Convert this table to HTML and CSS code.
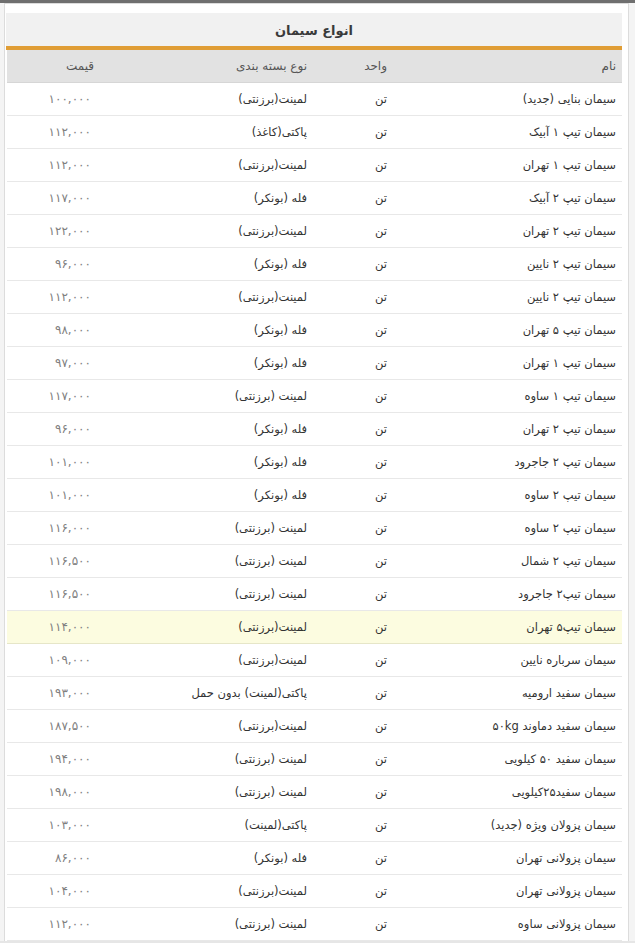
FILE: index.html
```html
<!DOCTYPE html>
<html lang="fa" dir="rtl">
<head>
<meta charset="utf-8">
<title>انواع سیمان</title>
<link rel="stylesheet" href="styles.css">
</head>
<body>
<div class="topbar"></div>
<div class="page">
  <div class="panel">
    <div class="title">انواع سیمان</div>
    <table class="grid">
      <colgroup>
        <col class="c-name"><col class="c-unit"><col class="c-pack"><col class="c-price">
      </colgroup>
      <thead>
        <tr><th>نام</th><th>واحد</th><th>نوع بسته بندی</th><th>قیمت</th></tr>
      </thead>
      <tbody>
        <tr><td>سیمان بنایی (جدید)</td><td>تن</td><td>لمینت(برزنتی)</td><td class="price">۱۰۰,۰۰۰</td></tr>
        <tr><td>سیمان تیپ ۱ آبیک</td><td>تن</td><td>پاکتی(کاغذ)</td><td class="price">۱۱۲,۰۰۰</td></tr>
        <tr><td>سیمان تیپ ۱ تهران</td><td>تن</td><td>لمینت(برزنتی)</td><td class="price">۱۱۲,۰۰۰</td></tr>
        <tr><td>سیمان تیپ ۲ آبیک</td><td>تن</td><td>فله (بونکر)</td><td class="price">۱۱۷,۰۰۰</td></tr>
        <tr><td>سیمان تیپ ۲ تهران</td><td>تن</td><td>لمینت(برزنتی)</td><td class="price">۱۲۲,۰۰۰</td></tr>
        <tr><td>سیمان تیپ ۲ نایین</td><td>تن</td><td>فله (بونکر)</td><td class="price">۹۶,۰۰۰</td></tr>
        <tr><td>سیمان تیپ ۲ نایین</td><td>تن</td><td>لمینت(برزنتی)</td><td class="price">۱۱۲,۰۰۰</td></tr>
        <tr><td>سیمان تیپ ۵ تهران</td><td>تن</td><td>فله (بونکر)</td><td class="price">۹۸,۰۰۰</td></tr>
        <tr><td>سیمان تیپ ۱ تهران</td><td>تن</td><td>فله (بونکر)</td><td class="price">۹۷,۰۰۰</td></tr>
        <tr><td>سیمان تیپ ۱ ساوه</td><td>تن</td><td>لمینت (برزنتی)</td><td class="price">۱۱۷,۰۰۰</td></tr>
        <tr><td>سیمان تیپ ۲ تهران</td><td>تن</td><td>فله (بونکر)</td><td class="price">۹۶,۰۰۰</td></tr>
        <tr><td>سیمان تیپ ۲ جاجرود</td><td>تن</td><td>فله (بونکر)</td><td class="price">۱۰۱,۰۰۰</td></tr>
        <tr><td>سیمان تیپ ۲ ساوه</td><td>تن</td><td>فله (بونکر)</td><td class="price">۱۰۱,۰۰۰</td></tr>
        <tr><td>سیمان تیپ ۲ ساوه</td><td>تن</td><td>لمینت (برزنتی)</td><td class="price">۱۱۶,۰۰۰</td></tr>
        <tr><td>سیمان تیپ ۲ شمال</td><td>تن</td><td>لمینت (برزنتی)</td><td class="price">۱۱۶,۵۰۰</td></tr>
        <tr><td>سیمان تیپ۲ جاجرود</td><td>تن</td><td>لمینت (برزنتی)</td><td class="price">۱۱۶,۵۰۰</td></tr>
        <tr class="hl"><td>سیمان تیپ۵ تهران</td><td>تن</td><td>لمینت(برزنتی)</td><td class="price">۱۱۴,۰۰۰</td></tr>
        <tr><td>سیمان سرباره نایین</td><td>تن</td><td>لمینت(برزنتی)</td><td class="price">۱۰۹,۰۰۰</td></tr>
        <tr><td>سیمان سفید ارومیه</td><td>تن</td><td>پاکتی(لمینت) بدون حمل</td><td class="price">۱۹۳,۰۰۰</td></tr>
        <tr><td>سیمان سفید دماوند ۵۰kg</td><td>تن</td><td>لمینت(برزنتی)</td><td class="price">۱۸۷,۵۰۰</td></tr>
        <tr><td>سیمان سفید ۵۰ کیلویی</td><td>تن</td><td>لمینت (برزنتی)</td><td class="price">۱۹۴,۰۰۰</td></tr>
        <tr><td>سیمان سفید۲۵کیلویی</td><td>تن</td><td>لمینت (برزنتی)</td><td class="price">۱۹۸,۰۰۰</td></tr>
        <tr><td>سیمان پزولان ویژه (جدید)</td><td>تن</td><td>پاکتی(لمینت)</td><td class="price">۱۰۳,۰۰۰</td></tr>
        <tr><td>سیمان پزولانی تهران</td><td>تن</td><td>فله (بونکر)</td><td class="price">۸۶,۰۰۰</td></tr>
        <tr><td>سیمان پزولانی تهران</td><td>تن</td><td>لمینت(برزنتی)</td><td class="price">۱۰۴,۰۰۰</td></tr>
        <tr><td>سیمان پزولانی ساوه</td><td>تن</td><td>لمینت (برزنتی)</td><td class="price">۱۱۲,۰۰۰</td></tr>
      </tbody>
    </table>
  </div>
</div>
</body>
</html>
```
FILE: styles.css
```css
html, body {
  margin: 0;
  padding: 0;
}
body {
  background: #e6e6e6;
  font-family: "DejaVu Sans", "Noto Sans", sans-serif;
  color: #333;
  width: 635px;
  height: 943px;
  overflow: hidden;
}
.topbar {
  height: 3px;
  background: #6f6f6f;
}
.page {
  padding: 0 6px 0 4px;
  background: #f4f4f4;
}
.panel {
  background: #fff;
  border: 1px solid #dcdcdc;
  border-bottom: none;
  padding: 9px 6px 0 1px;
}
.title {
  height: 33px;
  line-height: 35px;
  background: #f1f1f1;
  text-align: center;
  font-weight: bold;
  font-size: 13px;
  color: #3a3a3a;
  border-bottom: 4px solid #e09d35;
}
.grid {
  width: 615px;
  border-collapse: collapse;
  table-layout: fixed;
}
.c-name { width: 229px; }
.c-unit { width: 80px; }
.c-pack { width: 213px; }
.c-price { width: 93px; }
.grid th {
  height: 32px;
  background: #e2e2e2;
  color: #555;
  font-weight: normal;
  font-size: 12px;
  text-align: right;
  padding: 0 6px;
  border-bottom: 1px solid #d6d6d6;
}
.grid td {
  height: 32px;
  padding: 0 6px;
  font-size: 11.5px;
  text-align: right;
  border-bottom: 1px solid #e8e8e8;
  white-space: nowrap;
}
.grid td.price {
  color: #808080;
  font-size: 12px;
  letter-spacing: 2.8px;
  padding-right: 9px;
}
.grid tr.hl td {
  background: #fcfce0;
  border-bottom-color: #e6e6c8;
}
```
